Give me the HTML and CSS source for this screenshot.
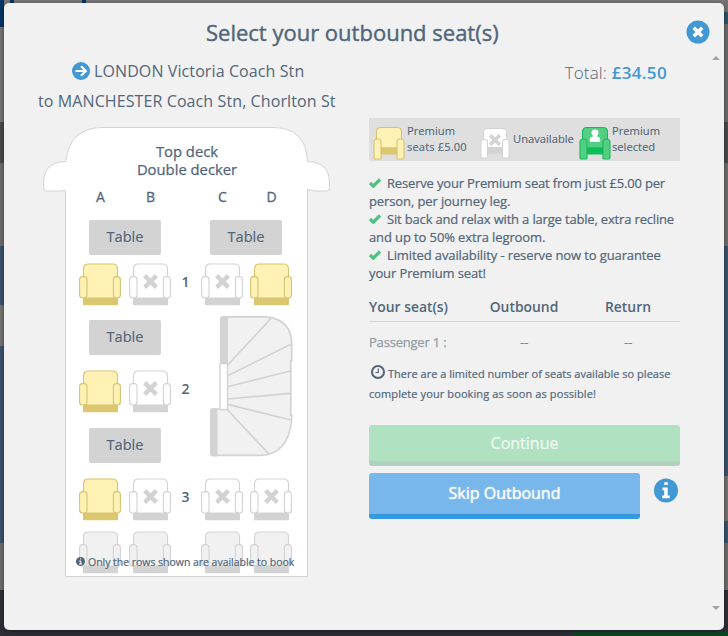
FILE: index.html
```html
<!DOCTYPE html>
<html lang="en">
<head>
<meta charset="utf-8">
<title>Select your outbound seat(s)</title>
<link rel="stylesheet" href="styles.css">
</head>
<body>
<svg class="defs" width="0" height="0" aria-hidden="true">
  <symbol id="seat" viewBox="0 0 42 43">
    <path class="base" d="M4 34h35v7.500q0 .8-.8.8H4.800Q4 42.300 4 41.500z"/>
    <path class="part" d="M4.500 35V6q0-5 5-5h24q5 0 5 5v29z"/>
    <rect class="part" x=".6" y="13.600" width="7.400" height="21.400" rx="3"/>
    <rect class="part" x="34.400" y="13.600" width="7" height="21.400" rx="3"/>
  </symbol>
  <symbol id="cross" viewBox="0 0 16 16"><path d="M2.500 2.500l11 11M13.500 2.500l-11 11"/></symbol>
  <symbol id="chair" viewBox="0 0 32 34">
    <path class="part" d="M3.500 22V6q0-4.500 4.500-4.500h16q4.500 0 4.500 4.500v16z"/>
    <path class="base" d="M4 21.500h24v7H4z"/>
    <path class="part" d="M1 32V16q0-3 3.500-3T8 16v16q0 1-1 1H2.500Q1 33 1 32zM24 32V16q0-3 3.500-3T31 16v16q0 1-1.500 1H25q-1 0-1-1z"/>
  </symbol>
  <symbol id="tick" viewBox="0 0 12 10"><path d="M1 5l3.300 3.200L11 1.500"/></symbol>
</svg>

<main class="modal">
  <h1>Select your outbound seat(s)</h1>
  <button class="close" aria-label="Close"><svg width="24" height="24" viewBox="0 0 24 24"><circle cx="12" cy="12" r="11.500"/><path d="M7.800 7.800l8.400 8.400M16.200 7.800l-8.400 8.400"/></svg></button>
  <i class="scroll up"></i><i class="scroll down"></i>

  <div class="columns">
    <section class="left">
      <div class="route">
        <div class="from"><svg width="18" height="18" viewBox="0 0 18 18"><circle cx="9" cy="9" r="9"/><path d="M3.500 9h10M9 4.200L13.800 9 9 13.800"/></svg><span>LONDON Victoria Coach Stn</span></div>
        <div class="to"><span>to MANCHESTER Coach Stn, Chorlton St</span></div>
      </div>

      <div class="bus">
        <svg class="shell" width="288" height="451" viewBox="0 0 288 451"><path d="M22.500 449.500V63.500Q16 64.500 3.500 64 .5 64 .5 61V56Q.5 35 23 34.500 26 .5 60 .5H230Q263 .5 264.500 34.500 286.500 35 286.500 56v5q0 3-3 3-12.500.5-19-1.500v387z"/></svg>
        <div class="deck"><div>Top deck</div><div>Double decker</div></div>
        <div class="cells letters"><b>A</b><b>B</b><i></i><b>C</b><b>D</b></div>
        <div class="tables first"><span>Table</span><span>Table</span></div>
        <div class="cells">
          <svg class="seat premium"><use href="#seat"/></svg>
          <svg class="seat taken"><use href="#seat"/><use class="x" href="#cross" x="13" y="10" width="17" height="17"/></svg>
          <b>1</b>
          <svg class="seat taken"><use href="#seat"/><use class="x" href="#cross" x="13" y="10" width="17" height="17"/></svg>
          <svg class="seat premium"><use href="#seat"/></svg>
        </div>
        <div class="middle">
          <div>
            <div class="tables second"><span>Table</span></div>
            <div class="cells short">
              <svg class="seat premium"><use href="#seat"/></svg>
              <svg class="seat taken"><use href="#seat"/><use class="x" href="#cross" x="13" y="10" width="17" height="17"/></svg>
              <b>2</b>
            </div>
            <div class="tables second"><span>Table</span></div>
          </div>
          <svg class="stairs" width="83" height="141" viewBox="0 0 83 141">
            <path class="floor" d="M12 .8H56Q81.500 3 81.700 28V45h-.9v54h.9v5Q78 139 50 139.300H3V93h14V.8z"/>
            <path class="steps" d="M17.700 49L61 2.300M17.700 59.700L81 28.300M17.700 70.700L80.300 55M17.700 83l62.600-5.700M17.700 88.300L81 104M17.700 94l40.600 43.300"/>
            <path class="rail" d="M10 47.500V3q0-3 3-3h4.700v47.500zM0 137V95q0-3 3-3h4.500v48.500H3q-3 0-3-3.500z"/>
            <rect class="post" x="10" y="47.500" width="7.500" height="46"/>
          </svg>
        </div>
        <div class="cells third">
          <svg class="seat premium"><use href="#seat"/></svg>
          <svg class="seat taken"><use href="#seat"/><use class="x" href="#cross" x="13" y="10" width="17" height="17"/></svg>
          <b>3</b>
          <svg class="seat taken"><use href="#seat"/><use class="x" href="#cross" x="13" y="10" width="17" height="17"/></svg>
          <svg class="seat taken"><use href="#seat"/><use class="x" href="#cross" x="13" y="10" width="17" height="17"/></svg>
        </div>
        <div class="cells fourth">
          <svg class="seat off"><use href="#seat"/></svg>
          <svg class="seat off"><use href="#seat"/></svg>
          <i></i>
          <svg class="seat off"><use href="#seat"/></svg>
          <svg class="seat off"><use href="#seat"/></svg>
        </div>
        <div class="rows-note"><svg width="9" height="9" viewBox="0 0 9 9"><circle cx="4.500" cy="4.500" r="4.500"/><path d="M3.200 4h1.600v3M3 7h3.200M4 2h1.200"/></svg><span>Only the rows shown are available to book</span></div>
      </div>
    </section>

    <section class="right">
      <div class="total"><span class="label">Total:</span> <span class="price">£34.50</span></div>
      <div class="legend">
        <svg class="chair premium"><use href="#chair"/></svg>
        <p class="l1"><span>Premium</span><br><span class="fee">seats £5.00</span></p>
        <svg class="chair taken"><use href="#chair"/><use class="x" href="#cross" x="8" y="7" width="14" height="14"/></svg>
        <p class="l2"><span>Unavailable</span></p>
        <svg class="chair selected"><use href="#chair"/><path class="person" d="M12.500 6.500q0-3 3.500-3t3.500 3q0 2-1.300 3v1.300q3 .2 3 2.500V15q0 1-1 1h-8.400q-1 0-1-1v-1.700q0-2.300 3-2.500V9.500q-1.300-1-1.300-3z"/></svg>
        <p class="l3"><span>Premium</span><br><span>selected</span></p>
      </div>
      <div class="benefits">
        <svg><use href="#tick"/></svg><span class="tight">Reserve your Premium seat from just £5.00 per</span><br><span>person, per journey leg.</span><br>
        <svg><use href="#tick"/></svg><span class="tight">Sit back and relax with a large table, extra recline</span><br><span>and up to 50% extra legroom.</span><br>
        <svg><use href="#tick"/></svg><span>Limited availability - reserve now to guarantee</span><br><span>your Premium seat!</span>
      </div>
      <div class="table-row head"><span>Your seat(s)</span><span>Outbound</span><span>Return</span></div>
      <div class="table-row passenger"><span>Passenger 1 :</span><a>--</a><a>--</a></div>
      <div class="limited"><svg width="14" height="14" viewBox="0 0 14 14"><circle cx="7" cy="7" r="6"/><path d="M7.300 3.500v4H4.500"/></svg><span class="n1">There are a limited number of seats available so please</span><br><span class="n2">complete your booking as soon as possible!</span></div>
      <button class="btn continue"><span>Continue</span></button>
      <div class="skip-row">
        <button class="btn skip"><span>Skip Outbound</span></button>
        <svg width="24" height="25" viewBox="0 0 24 25"><circle cx="12" cy="12.500" r="12"/><path d="M10.300 4.300h3.400v2.700h-3.400zM8.500 9.500h5.200v8h2v2.700H8.200v-2.700h2v-5.300H8.500z"/></svg>
      </div>
    </section>
  </div>
</main>
</body>
</html>
```
FILE: styles.css
```css
* { box-sizing: border-box; }
body {
  margin: 0;
  width: 728px;
  height: 636px;
  overflow: hidden;
  padding: 3px 4px 6px;
  font-family: "Open Sans", sans-serif;
  color: #51667a;
  background:
    linear-gradient(#0b4522, #0b4522) 573px 631px / 155px 5px no-repeat,
    linear-gradient(#003565, #003565) 10px 0 / 4px 3px no-repeat,
    linear-gradient(#003565, #003565) 82px 0 / 4px 3px no-repeat,
    linear-gradient(#003565 27px, #757371 27px 122px, #484a4c 122px 163px, #6d6c6a 163px 246px, #3c526c 246px 305px, #757371 305px 346px, #3c526c 346px 543px, #6d6c6a 543px 590px, #2c3036 590px) 0 0 / 4px 100% no-repeat,
    linear-gradient(#757371 12px, #2d5468 12px 24px, #696969 24px 122px, #484a4c 122px 163px, #6d6c6a 163px 246px, #3c526c 246px 476px, #757371 476px 521px, #3c526c 521px 543px, #6d6c6a 543px 590px, #2c3036 590px) 724px 0 / 4px 100% no-repeat,
    linear-gradient(#777 50%, #2c3036 50%);
}
.defs { position: absolute; }
.modal {
  position: relative;
  width: 720px;
  height: 627px;
  border-radius: 5px;
  background: #f1f1f1;
  box-shadow: 0 1px 4px rgba(0, 0, 0, .45);
}
h1 {
  margin: 0;
  padding: 13px 0 1px 202px;
  font-size: 22px;
  line-height: 32px;
  font-weight: 500;
  white-space: nowrap;
  -webkit-text-stroke: .4px;
}
button { border: 0; padding: 0; background: none; font: inherit; }
.close { position: absolute; left: 682px; top: 17px; width: 24px; height: 24px; }
.close svg { display: block; }
circle { fill: #4298d2; }
.close path { stroke: #fff; stroke-width: 3.6; }
.scroll { position: absolute; left: 708px; border: 4px solid transparent; }
.up { top: 49px; border-bottom-color: #a3a3a3; }
.down { top: 603px; border-top-color: #a3a3a3; }

.columns { display: grid; grid-template-columns: 365px 311px; }
.route { height: 75px; padding-top: 7px; font-size: 16px; line-height: 30px; letter-spacing: .1px; white-space: nowrap; }
.from { display: flex; align-items: center; padding-left: 68px; gap: 4px; }
.from path { fill: none; stroke: #fff; stroke-width: 2.2; }
.to { padding-left: 34px; }

.bus { position: relative; width: 288px; height: 451px; margin: 3px 0 0 39px; }
.shell { position: absolute; left: 0; top: 0; }
.shell path { fill: #fff; stroke: #d3d3d3; }
.bus > :not(.shell) { position: relative; }
.deck { height: 61px; padding-top: 15px; text-align: center; font-size: 14.8px; line-height: 18px; font-weight: 500; -webkit-text-stroke: .25px; }
.cells {
  display: grid;
  grid-template-columns: 50px 46px 26px 49px 42px;
  margin-left: 36px;
  height: 43px;
}
.cells b { font-size: 14px; font-weight: 600; line-height: 38px; text-align: center; }
.cells:not(.letters) b { padding-right: 5px; }
.cells.letters { height: 32px; }
.letters b { line-height: 18px; width: 43px; font-weight: 500; -webkit-text-stroke: .3px; }
.seat { display: block; width: 42px; height: 43px; --fill: #fff; --base: #d3d3d3; }
.part { fill: var(--fill); stroke: var(--line, #d3d3d3); stroke-width: 1.1; }
.base { fill: var(--base); stroke: none; }
.premium { --fill: #fff2b4; --line: #d8c371; --base: #dcc771; }
.off { --fill: #f1f1f1; }
.x { stroke: #d3d3d3; stroke-width: 4.2; }
.tables { display: flex; gap: 49px; margin-left: 46px; height: 43px; }
.tables > span { width: 72px; height: 35px; border-radius: 2px; background: #d3d3d3; text-align: center; font-size: 14.6px; line-height: 33px; -webkit-text-stroke: .15px; }
.middle { display: flex; height: 162px; padding-top: 10px; }
.middle > div { width: 167px; padding-top: 4px; }
.second { height: 50px; }
.short { grid-template-columns: 50px 46px 26px; height: 58px; }
.floor { fill: #f1f1f1; stroke: #d3d3d3; stroke-width: 1.7; }
.steps { fill: none; stroke: #d3d3d3; stroke-width: 1.7; }
.rail { fill: #d3d3d3; }
.post { fill: #fff; stroke: #d3d3d3; stroke-width: 1.4; }
.third { height: 53px; margin-top: 10px; }
.rows-note { display: flex; align-items: center; gap: 3px; height: 15px; margin: -20px 0 0 33px; font-size: 10.5px; white-space: nowrap; font-weight: 500; letter-spacing: -.03px; -webkit-text-stroke: .2px; }
.rows-note circle { fill: #51667a; }
.rows-note path { fill: none; stroke: #fff; stroke-width: 1; }

.total { height: 69px; padding: 9px 13px 0 0; text-align: right; font-size: 17px; line-height: 30px; letter-spacing: .15px; }
.label { font-weight: 300; }
.price { font-weight: 600; color: #4298d2; letter-spacing: .35px; }
.legend { display: flex; width: 311px; height: 43px; background: #dfdfdf; padding: 8px 0 0 4px; font-size: 11.2px; line-height: 16px; -webkit-text-stroke: .1px; }
.legend p { margin: -3px 0 0; white-space: nowrap; }
.fee { letter-spacing: .1px; }
.chair { width: 32px; height: 34px; flex: none; display: block; }
.chair.taken { width: 30px; --fill: #fff; --base: #d3d3d3; }
.selected { --fill: #52cf83; --base: #0dbd55; --line: #18ba5b; }
.person { fill: #fff; }
.legend .l1 { width: 75px; padding-left: 2px; }
.legend .l2 { width: 69px; padding: 8px 0 0 3px; }
.legend .l3 { padding-left: 1px; }
.benefits { margin-top: 13px; font-size: 13px; line-height: 18px; white-space: nowrap; font-weight: 500; letter-spacing: -.11px; -webkit-text-stroke: .2px; }
.tight { letter-spacing: -.17px; }
.benefits svg { width: 12px; height: 10px; margin-right: 6px; fill: none; stroke: #4dc380; stroke-width: 3.2; }
.table-row { display: grid; grid-template-columns: 103px 104px 104px; text-align: center; }
.table-row > :first-child { text-align: left; }
.head { height: 34px; line-height: 38px; margin-top: 6px; border-bottom: 1px solid #d3d3d3; font-size: 13.9px; font-weight: 600; }
.passenger { height: 40px; line-height: 40px; font-size: 13px; letter-spacing: -.2px; color: #929ba6; font-weight: 500; -webkit-text-stroke: .25px; }
.passenger a { color: #4298d2; }
.limited { font-size: 11px; line-height: 20px; padding-top: 2px; height: 63px; white-space: nowrap; font-weight: 500; -webkit-text-stroke: .2px; }
.limited svg { vertical-align: -1px; margin: 0 3px 0 2px; }
.n1 { letter-spacing: .01px; }
.n2 { letter-spacing: .1px; }
.limited circle, .limited path { fill: none; stroke: #51667a; stroke-width: 2; }
.limited path { stroke-width: 1.2; }
.btn { display: block; border-radius: 3px; color: #fff; text-align: center; font-size: 16px; font-weight: 500; -webkit-text-stroke: .2px; }
.continue { width: 311px; height: 41px; padding-bottom: 1px; background: #b0e2c2; border-bottom: 5px solid #b1d0bf; color: #f1f8f3; }
.skip-row { display: flex; gap: 14px; margin-top: 7px; }
.skip { width: 271px; height: 46px; padding-bottom: 2px; background: #77b7eb; border-bottom: 5px solid #3499e1; text-shadow: 0 0 2px rgba(255,255,255,.5); }
.skip-row svg { margin-top: 5px; }
.skip-row path { fill: #fff; }
```
